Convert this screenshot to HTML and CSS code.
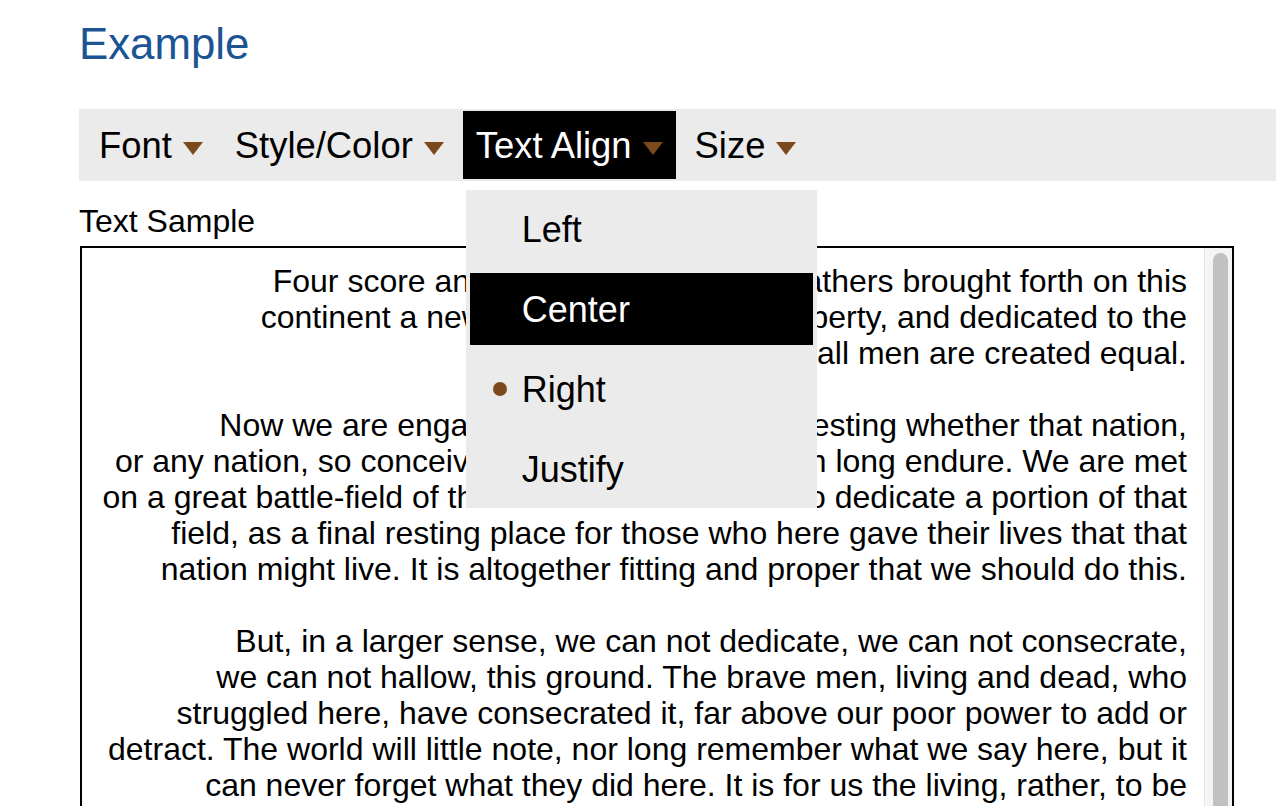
FILE: index.html
```html
<!DOCTYPE html>
<html>
<head>
    <meta charset="utf-8">
    <title>Example</title>
    <meta name="viewport" content="width=device-width, initial-scale=1">
    <link rel="stylesheet" href="styles.css">
</head>
<body>

<div class="page">
    <h1 class="title">Example</h1>

    <div class="menubar" role="menubar">
        <div class="menubar-item" role="menuitem">
            <span>Font</span>
            <svg class="caret" viewBox="0 0 20 13"><polygon points="0,0 20,0 10,13"></polygon></svg>
        </div>
        <div class="menubar-item" role="menuitem">
            <span>Style/Color</span>
            <svg class="caret" viewBox="0 0 20 13"><polygon points="0,0 20,0 10,13"></polygon></svg>
        </div>
        <div class="menubar-item is-open" role="menuitem" aria-expanded="true">
            <span>Text Align</span>
            <svg class="caret" viewBox="0 0 20 13"><polygon points="0,0 20,0 10,13"></polygon></svg>

            <ul class="dropdown" role="menu">
                <li role="menuitemradio">Left</li>
                <li role="menuitemradio" class="is-active">Center</li>
                <li role="menuitemradio" class="is-checked" aria-checked="true">Right</li>
                <li role="menuitemradio">Justify</li>
            </ul>
        </div>
        <div class="menubar-item" role="menuitem">
            <span>Size</span>
            <svg class="caret" viewBox="0 0 20 13"><polygon points="0,0 20,0 10,13"></polygon></svg>
        </div>
    </div>

    <div class="sample-label">Text Sample</div>
    <div class="sample">
        <div class="sample-text">
            <p>Four score and seven years ago our fathers brought forth on this<br>
            continent a new nation, conceived in Liberty, and dedicated to the<br>
            proposition that all men are created equal.</p>
            <p>Now we are engaged in a great civil war, testing whether that nation,<br>
            or any nation, so conceived and so dedicated, can long endure. We are met<br>
            on a great battle-field of that war. We have come to dedicate a portion of that<br>
            field, as a final resting place for those who here gave their lives that that<br>
            nation might live. It is altogether fitting and proper that we should do this.</p>
            <p>But, in a larger sense, we can not dedicate, we can not consecrate,<br>
            we can not hallow, this ground. The brave men, living and dead, who<br>
            struggled here, have consecrated it, far above our poor power to add or<br>
            detract. The world will little note, nor long remember what we say here, but it<br>
            can never forget what they did here. It is for us the living, rather, to be<br>
            dedicated here to the unfinished work which they who fought here have<br>
            thus far so nobly advanced. It is rather for us to be here dedicated to<br>
            the great task remaining before us&mdash;that from these honored dead we<br>
            take increased devotion to that cause for which they gave the last full<br>
            measure of devotion&mdash;that we here highly resolve that these dead shall<br>
            not have died in vain&mdash;that this nation, under God, shall have a new<br>
            birth of freedom&mdash;and that government of the people, by the people,<br>
            for the people, shall not perish from the earth.</p>
        </div>
        <div class="scrollbar"><div class="scrollbar-thumb"></div></div>
    </div>
</div>

</body>
</html>
```

FILE: styles.css
```css
html, body {
    overflow: hidden;
}
body {
    margin: 0;
    font-family: "Liberation Sans", Arial, Helvetica, sans-serif;
    color: #000;
    background: #fff;
}
.page {
    padding: 19px 0 0 79px;
}

.title {
    margin: 0 0 40px 0;
    font-size: 43.8px;
    line-height: 50px;
    font-weight: normal;
    color: #1c5493;
}

/* menubar */
.menubar {
    display: flex;
    gap: 6px;
    padding: 2px 0 2px 7px;
    background: #ebebeb;
    font-size: 36.4px;
}
.menubar-item {
    position: relative;
    display: flex;
    align-items: center;
    gap: 11px;
    height: 68px;
    padding: 2px 13px 0 13px;
    box-sizing: border-box;
    cursor: pointer;
    white-space: nowrap;
}
.menubar-item.is-open {
    background: #000;
    color: #fff;
}
.caret {
    width: 20px;
    height: 13px;
    margin-top: 5px;
    fill: #7a4a1c;
}

/* dropdown */
.dropdown {
    position: absolute;
    top: 79px;
    left: 3px;
    width: 343px;
    margin: 0;
    padding: 3px 4px;
    list-style: none;
    display: flex;
    flex-direction: column;
    gap: 8px;
    background: #ebebeb;
    color: #000;
    font-size: 36px;
    z-index: 10;
}
.dropdown li {
    position: relative;
    display: flex;
    align-items: center;
    height: 72px;
    box-sizing: border-box;
    padding: 2px 0 0 52px;
}
.dropdown li.is-active {
    background: #000;
    color: #fff;
}
.dropdown li.is-checked::before {
    content: "";
    position: absolute;
    left: 23px;
    top: 29px;
    width: 14px;
    height: 14px;
    border-radius: 50%;
    background: #7a4a1c;
}

/* text sample */
.sample-label {
    margin: 22px 0 7px 0;
    font-size: 32px;
    line-height: 36px;
}
.sample {
    display: flex;
    height: 640px;
    margin: 0 42px 0 1px;
    border: 2px solid #000;
    overflow: hidden;
}
.sample-text {
    flex: 1;
    padding: 15px 17px 0 16px;
    text-align: right;
    font-size: 32px;
    line-height: 36px;
    white-space: nowrap;
}
.sample-text p {
    margin: 0 0 36px 0;
}
.scrollbar {
    width: 28px;
    box-sizing: border-box;
    padding: 5px 4px 0 8px;
    background: #f4f4f4;
    border-left: 1px solid #e6e6e6;
}
.scrollbar-thumb {
    height: 600px;
    border-radius: 8px;
    background: #c1c1c1;
}
```
